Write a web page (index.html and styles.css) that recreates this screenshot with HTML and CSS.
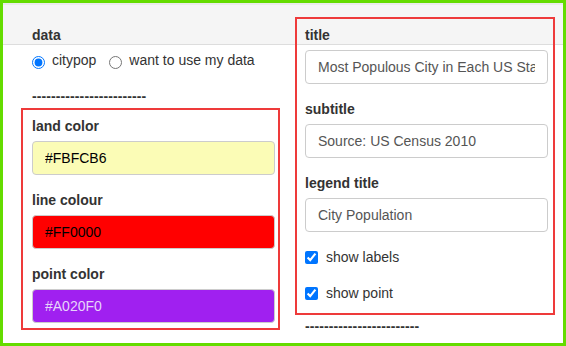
FILE: index.html
```html
<!DOCTYPE html>
<html lang="en">
<head>
    <meta charset="UTF-8">
    <meta name="viewport" content="width=device-width, initial-scale=1.0">
    <title>Map Options</title>
    <link rel="stylesheet" href="styles.css">
</head>
<body>
    <div class="frame">
        <div class="columns">
            <div class="col col-left">
                <div class="data-group">
                    <label class="control-label">data</label>
                    <div class="radio-row">
                        <label class="radio-item"><input type="radio" name="data" checked> citypop</label>
                        <label class="radio-item"><input type="radio" name="data"> want to use my data</label>
                    </div>
                    <div class="dashes">------------------------</div>
                </div>
                <div class="box box-left">
                    <div class="form-group">
                        <label class="control-label">land color</label>
                        <input class="form-control color-input land" type="text" value="#FBFCB6">
                    </div>
                    <div class="form-group">
                        <label class="control-label">line colour</label>
                        <input class="form-control color-input line" type="text" value="#FF0000">
                    </div>
                    <div class="form-group">
                        <label class="control-label">point color</label>
                        <input class="form-control color-input point" type="text" value="#A020F0">
                    </div>
                </div>
            </div>
            <div class="col col-right">
                <div class="box box-right">
                    <div class="form-group">
                        <label class="control-label">title</label>
                        <input class="form-control" type="text" value="Most Populous City in Each US State">
                    </div>
                    <div class="form-group">
                        <label class="control-label">subtitle</label>
                        <input class="form-control" type="text" value="Source: US Census 2010">
                    </div>
                    <div class="form-group">
                        <label class="control-label">legend title</label>
                        <input class="form-control" type="text" value="City Population">
                    </div>
                    <label class="check-item"><input type="checkbox" checked> show labels</label>
                    <label class="check-item"><input type="checkbox" checked> show point</label>
                </div>
                <div class="dashes dashes-right">------------------------</div>
            </div>
        </div>
    </div>
</body>
</html>
```

FILE: styles.css
```css
* { box-sizing: border-box; }
body { margin: 0; font-family: "Liberation Sans", Arial, sans-serif; font-size: 14px; line-height: 20px; color: #333; }
.frame { width: 566px; height: 346px; border: 3px solid #64dc00; overflow: hidden;
    background: linear-gradient(#ebebeb 0 2px, #f5f5f5 2px 41px, #dddddd 41px 42px, #fff 42px); }
.columns { display: flex; gap: 15px; padding-left: 18px; }
.col-left { width: 259px; padding-top: 22px; }
.col-right { width: 260px; padding-top: 14px; }
.data-group { padding-left: 11px; }
.control-label { display: block; font-weight: bold; margin-bottom: 5px; }
.radio-row { display: flex; height: 20px; }
.radio-item { display: flex; align-items: flex-start; margin-right: 13px; }
.radio-item input { width: 13px; height: 13px; margin: 6px 7px 0 0; }
.dashes { font-weight: bold; margin-top: 16px; margin-bottom: 2px; letter-spacing: 0.1px; }
.box { border: 2px solid #ee3a3a; }
.box-left { padding: 6px 3px 5px 9px; }
.box-right { padding: 6px 5px 10px 8px; }
.form-group { margin-bottom: 15px; }
.box-left .form-group:last-child { margin-bottom: 0; }
.form-control { display: block; width: 243px; height: 34px; padding: 6px 12px; font: inherit; font-size: 14px;
    color: #555; background: #fff; border: 1px solid #ccc; border-radius: 4px; outline: none; }
.color-input.land { background: #fbfcb6; color: #000; }
.color-input.line { background: #ff0000; color: #000; }
.color-input.point { background: #a020f0; color: #e6d4fa; }
.check-item { display: flex; align-items: flex-start; height: 20px; margin-bottom: 16px; }
.check-item:last-child { margin-bottom: 0; }
.check-item input { width: 13px; height: 13px; margin: 4px 8px 0 0; }
.dashes-right { margin-top: 1px; padding-left: 10px; }
```
